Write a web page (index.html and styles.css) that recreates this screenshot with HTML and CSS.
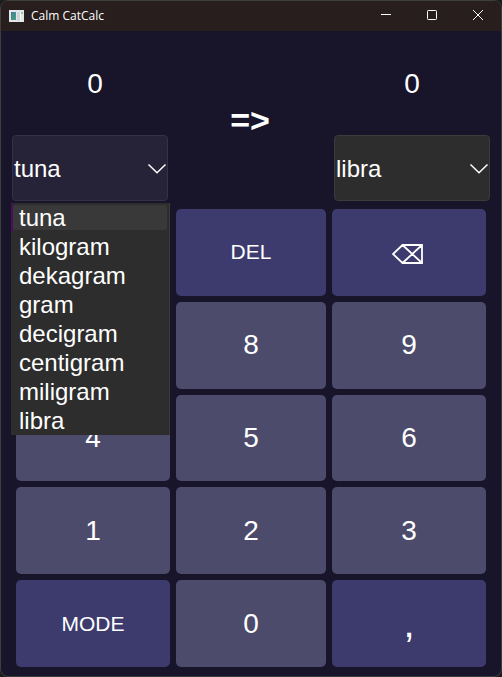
FILE: index.html
```html
<!DOCTYPE html>
<html lang="en">
<head>
<meta charset="utf-8">
<meta name="viewport" content="width=device-width, initial-scale=1">
<title>Calm CatCalc</title>
<link rel="stylesheet" href="styles.css">
</head>
<body>
<div class="window">
  <header class="titlebar">
    <svg class="app-icon" width="15" height="12" viewBox="0 0 15 12" aria-hidden="true">
      <defs>
        <linearGradient id="pane" x1="0" y1="0" x2="1" y2="1">
          <stop offset="0" stop-color="#3f7fa0"/>
          <stop offset="1" stop-color="#4aa37c"/>
        </linearGradient>
      </defs>
      <rect width="15" height="12" fill="#e4e6ea"/>
      <rect x="2" y="2" width="5" height="8" fill="url(#pane)"/>
      <rect x="8" y="2" width="3" height="9" fill="#d3d5da"/>
      <rect x="11" y="2" width="1" height="9" fill="#f4f5f7"/>
      <rect x="12" y="2" width="2" height="2" fill="#8fc4a4"/>
      <rect x="12" y="4" width="2" height="6" fill="#dcebe4"/>
    </svg>
    <h1 class="title">Calm CatCalc</h1>
    <div class="controls">
      <button class="control" type="button" aria-label="Minimize"><svg width="10" height="10" viewBox="0 0 10 10"><path d="M0 4.5H10"/></svg></button>
      <button class="control" type="button" aria-label="Maximize"><svg width="10" height="10" viewBox="0 0 10 10"><rect x=".5" y=".5" width="9" height="9" rx=".8"/></svg></button>
      <button class="control" type="button" aria-label="Close"><svg width="10" height="10" viewBox="0 0 10 10"><path d="M0 0L10 10M10 0L0 10"/></svg></button>
    </div>
  </header>

  <main class="calculator">
    <section class="converter">
      <div class="field">
        <output class="amount">0</output>
        <div class="picker">
          <select class="unit unit-open" aria-label="From unit">
            <option selected>tuna</option><option>kilogram</option><option>dekagram</option><option>gram</option>
            <option>decigram</option><option>centigram</option><option>miligram</option><option>libra</option>
          </select>
          <svg class="chevron" width="20" height="12" viewBox="0 0 20 12" aria-hidden="true"><path d="M1.5 1.5L10 9.8L18.5 1.5"/></svg>
          <ul class="menu" role="listbox" aria-label="From unit">
            <li class="choice choice-current" role="option" aria-selected="true">tuna</li>
            <li class="choice" role="option">kilogram</li>
            <li class="choice" role="option">dekagram</li>
            <li class="choice" role="option">gram</li>
            <li class="choice" role="option">decigram</li>
            <li class="choice" role="option">centigram</li>
            <li class="choice" role="option">miligram</li>
            <li class="choice" role="option">libra</li>
          </ul>
        </div>
      </div>
      <div class="arrow">=&gt;</div>
      <div class="field">
        <output class="amount">0</output>
        <div class="picker">
          <select class="unit" aria-label="To unit">
            <option>tuna</option><option>kilogram</option><option>dekagram</option><option>gram</option>
            <option>decigram</option><option>centigram</option><option>miligram</option><option selected>libra</option>
          </select>
          <svg class="chevron" width="20" height="12" viewBox="0 0 20 12" aria-hidden="true"><path d="M1.5 1.5L10 9.8L18.5 1.5"/></svg>
        </div>
      </div>
    </section>

    <section class="keypad" aria-label="Keypad">
      <button class="key key-action" type="button" aria-label="Clear"></button>
      <button class="key key-action" type="button">DEL</button>
      <button class="key key-action key-icon" type="button" aria-label="Backspace"><svg class="backspace" width="32" height="22" viewBox="0 0 32 22"><path d="M10.5 2H30V20H10.5L1 11ZM10.5 2L30 20M30 2L10.5 20"/></svg></button>
      <button class="key" type="button">7</button>
      <button class="key" type="button">8</button>
      <button class="key" type="button">9</button>
      <button class="key" type="button">4</button>
      <button class="key" type="button">5</button>
      <button class="key" type="button">6</button>
      <button class="key" type="button">1</button>
      <button class="key" type="button">2</button>
      <button class="key" type="button">3</button>
      <button class="key key-action" type="button">MODE</button>
      <button class="key" type="button">0</button>
      <button class="key key-action key-comma" type="button">,</button>
    </section>
  </main>
</div>
</body>
</html>
```
FILE: styles.css
```css
* {
  box-sizing: border-box;
}

body {
  margin: 0;
  background: #1c1c1c;
  color: #fff;
  font-family: "Liberation Sans", Arial, sans-serif;
}

button,
select {
  margin: 0;
  font-family: inherit;
  color: inherit;
}

.window {
  display: flex;
  flex-direction: column;
  min-height: 100vh;
  border: 1px solid #3d3f3e;
  border-radius: 8px;
  background: #18152b;
}

.titlebar {
  display: flex;
  align-items: center;
  height: 30px;
  padding-left: 8px;
  border-radius: 7px 7px 0 0;
  background: #281e1e;
}

.title {
  flex: 1;
  margin: 0 0 0 7px;
  font: 400 12px/16px "Open Sans", "Noto Sans", sans-serif;
}

.controls {
  display: flex;
  align-self: stretch;
}

.control {
  display: flex;
  align-items: center;
  justify-content: center;
  width: 46px;
  padding: 0 0 2px;
  border: 0;
  background: none;
}

.control svg {
  overflow: visible;
  fill: none;
  stroke: #fff;
  stroke-width: 1;
}

.calculator {
  display: flex;
  flex: 1;
  flex-direction: column;
}

.converter {
  display: grid;
  grid-template-columns: 166fr 144fr 168fr;
  height: 170px;
  padding: 2px 11px 0;
}

.field {
  display: flex;
  flex-direction: column;
}

.field:last-child {
  padding-left: 12px;
}

.amount {
  display: flex;
  flex: 1;
  align-items: center;
  justify-content: center;
  font-size: 28px;
}

.arrow {
  display: flex;
  align-items: center;
  justify-content: center;
  padding-top: 6px;
  font-size: 34px;
  font-weight: 700;
}

.picker {
  position: relative;
  height: 66px;
}

.field:first-child .picker {
  margin-right: 10px;
}

.unit {
  appearance: none;
  width: 100%;
  height: 100%;
  padding: 0 24px 0 1px;
  border: 1px solid #3b3b3d;
  border-radius: 4px;
  background: #2d2d2d;
  font-size: 24px;
}

.unit-open {
  border-color: #353246;
  background: #262339;
}

.chevron {
  position: absolute;
  top: 28px;
  right: 1px;
  fill: none;
  stroke: #fff;
  stroke-width: 1.5;
  pointer-events: none;
}

.menu {
  position: absolute;
  z-index: 1;
  top: 68px;
  right: -2px;
  left: -1px;
  margin: 0;
  padding: 0;
  border-right: 1px solid #3a3a3a;
  background: #2d2d2d;
  list-style: none;
}

.choice {
  padding-left: 8px;
  font-size: 24px;
  line-height: 29px;
}

.choice-current {
  position: relative;
  z-index: 0;
  padding-left: 6px;
  border-left: 2px solid #4b0f5c;
}

.choice-current::before {
  content: "";
  position: absolute;
  z-index: -1;
  inset: 2px 2px 2px 0;
  border-radius: 3px;
  background: #393939;
}

.keypad {
  display: grid;
  flex: 1;
  grid-template-rows: repeat(5, 1fr);
  grid-template-columns: 154fr 150fr 154fr;
  gap: 6px;
  padding: 8px 15px 9px;
}

.key {
  display: flex;
  align-items: center;
  justify-content: center;
  min-width: 0;
  padding: 0;
  border: 0;
  border-radius: 5px;
  background: #4c4b6c;
  font-size: 28px;
}

.key-action {
  background: #3d3b6e;
  font-size: 21px;
}

.key-icon {
  padding: 4px 2px 0 0;
}

.key-comma {
  font-size: 40px;
}

.backspace {
  fill: none;
  stroke: #fff;
  stroke-width: 1.8;
}
```
